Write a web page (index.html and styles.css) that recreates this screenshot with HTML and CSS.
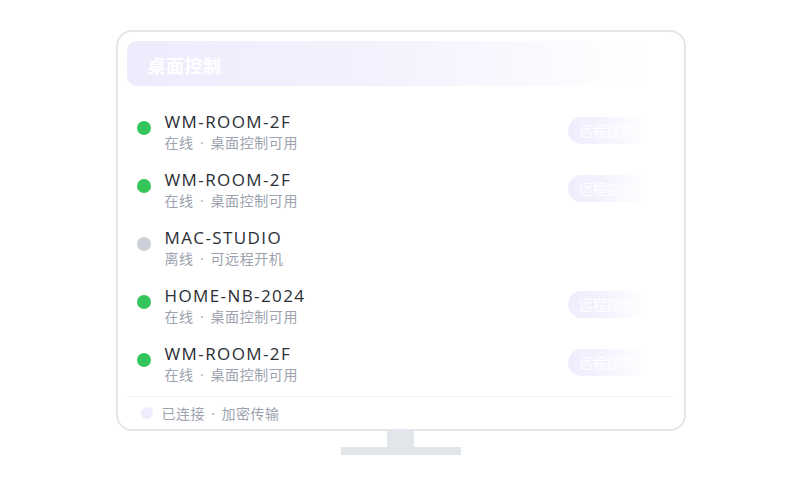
FILE: index.html
```html
<!DOCTYPE html>
<html lang="zh-CN">
<head>
<meta charset="utf-8">
<title>桌面控制</title>
<link rel="stylesheet" href="styles.css">
</head>
<body>
<div class="monitor">
  <div class="screen">
    <div class="header">
      <span class="title">桌面控制</span>
      <span class="header-meta">4 台设备</span>
    </div>
    <ul class="list">
      <li class="row">
        <span class="dot online"></span>
        <div class="info">
          <div class="name">WM-ROOM-2F</div>
          <div class="sub">在线 · 桌面控制可用</div>
        </div>
        <span class="btn">远程控制</span>
      </li>
      <li class="row">
        <span class="dot online"></span>
        <div class="info">
          <div class="name">WM-ROOM-2F</div>
          <div class="sub">在线 · 桌面控制可用</div>
        </div>
        <span class="btn">远程控制</span>
      </li>
      <li class="row">
        <span class="dot offline"></span>
        <div class="info">
          <div class="name">MAC-STUDIO</div>
          <div class="sub">离线 · 可远程开机</div>
        </div>
      </li>
      <li class="row">
        <span class="dot online"></span>
        <div class="info">
          <div class="name">HOME-NB-2024</div>
          <div class="sub">在线 · 桌面控制可用</div>
        </div>
        <span class="btn">远程控制</span>
      </li>
      <li class="row">
        <span class="dot online"></span>
        <div class="info">
          <div class="name">WM-ROOM-2F</div>
          <div class="sub">在线 · 桌面控制可用</div>
        </div>
        <span class="btn">远程控制</span>
      </li>
    </ul>
    <div class="footer">
      <span class="fdot"></span>
      <span class="ftext">已连接 · 加密传输</span>
    </div>
  </div>
  <div class="neck"></div>
  <div class="base"></div>
</div>
</body>
</html>
```
FILE: styles.css
```css
* { box-sizing: border-box; }
html, body { margin: 0; padding: 0; background: #ffffff; }
body {
  font-family: "Open Sans", "Noto Sans CJK SC", sans-serif;
  width: 800px;
  height: 500px;
  overflow: hidden;
}
.monitor {
  width: 570px;
  margin: 30px auto 0;
  display: flex;
  flex-direction: column;
  align-items: center;
  position: relative;
  left: 0.5px;
}
.screen {
  width: 570px;
  height: 401px;
  border: 2px solid #e3e6ea;
  border-radius: 16px;
  padding: 9px 10px 0 9px;
  display: flex;
  flex-direction: column;
  background: #fff;
}
.header {
  height: 45px;
  border-radius: 10px;
  background: linear-gradient(90deg, #efebfd 0%, #f5f2fe 50%, #ffffff 95%);
  display: flex;
  align-items: center;
  justify-content: space-between;
  padding: 2px 18px 0 21px;
  flex-shrink: 0;
}
.title {
  color: #ffffff;
  font-family: "Noto Sans CJK SC", sans-serif;
  font-size: 18px;
  font-weight: 700;
  letter-spacing: 0.5px;
}
.header-meta {
  color: #ffffff;
  font-family: "Noto Sans CJK SC", sans-serif;
  font-size: 13px;
  margin-top: -6px;
}
.list {
  list-style: none;
  margin: 17px 0 0;
  padding: 0;
}
.row {
  height: 58px;
  display: flex;
  align-items: flex-start;
  padding: 8px 0 0 10px;
}
.dot {
  width: 14px;
  height: 14px;
  border-radius: 50%;
  margin-top: 10px;
  margin-right: 14px;
  flex-shrink: 0;
}
.dot.online { background: #34c65a; }
.dot.offline { background: #cbd0d8; }
.info { flex: 1; }
.name {
  font-size: 17px;
  line-height: 22px;
  color: #2a2d34;
  letter-spacing: 1.4px;
}
.sub {
  font-size: 14px;
  line-height: 20px;
  color: #9ca3af;
  letter-spacing: 0.6px;
  word-spacing: 2px;
}
.btn {
  margin-top: 6px;
  margin-right: 24px;
  width: 82px;
  height: 27px;
  border-radius: 14px;
  background: linear-gradient(90deg, #efecfd 0%, #f4f1fe 40%, #ffffff 95%);
  color: #ffffff;
  font-size: 14px;
  line-height: 27px;
  padding-left: 11px;
  font-family: "Noto Sans CJK SC", serif;
}
.footer {
  border-top: 1px solid #eef0f3;
  margin-top: 3px;
  height: 32px;
  display: flex;
  align-items: center;
  padding-left: 14px;
  padding-top: 1px;
}
.fdot {
  width: 12px;
  height: 12px;
  border-radius: 50%;
  background: #efedfd;
  margin-right: 9px;
}
.ftext {
  font-size: 14px;
  color: #9ca3af;
  letter-spacing: 0.5px;
  word-spacing: 2px;
}
.neck {
  width: 27px;
  height: 16px;
  background: #e2e6ea;
}
.base {
  width: 120px;
  height: 8px;
  background: #e2e6ea;
}
```
